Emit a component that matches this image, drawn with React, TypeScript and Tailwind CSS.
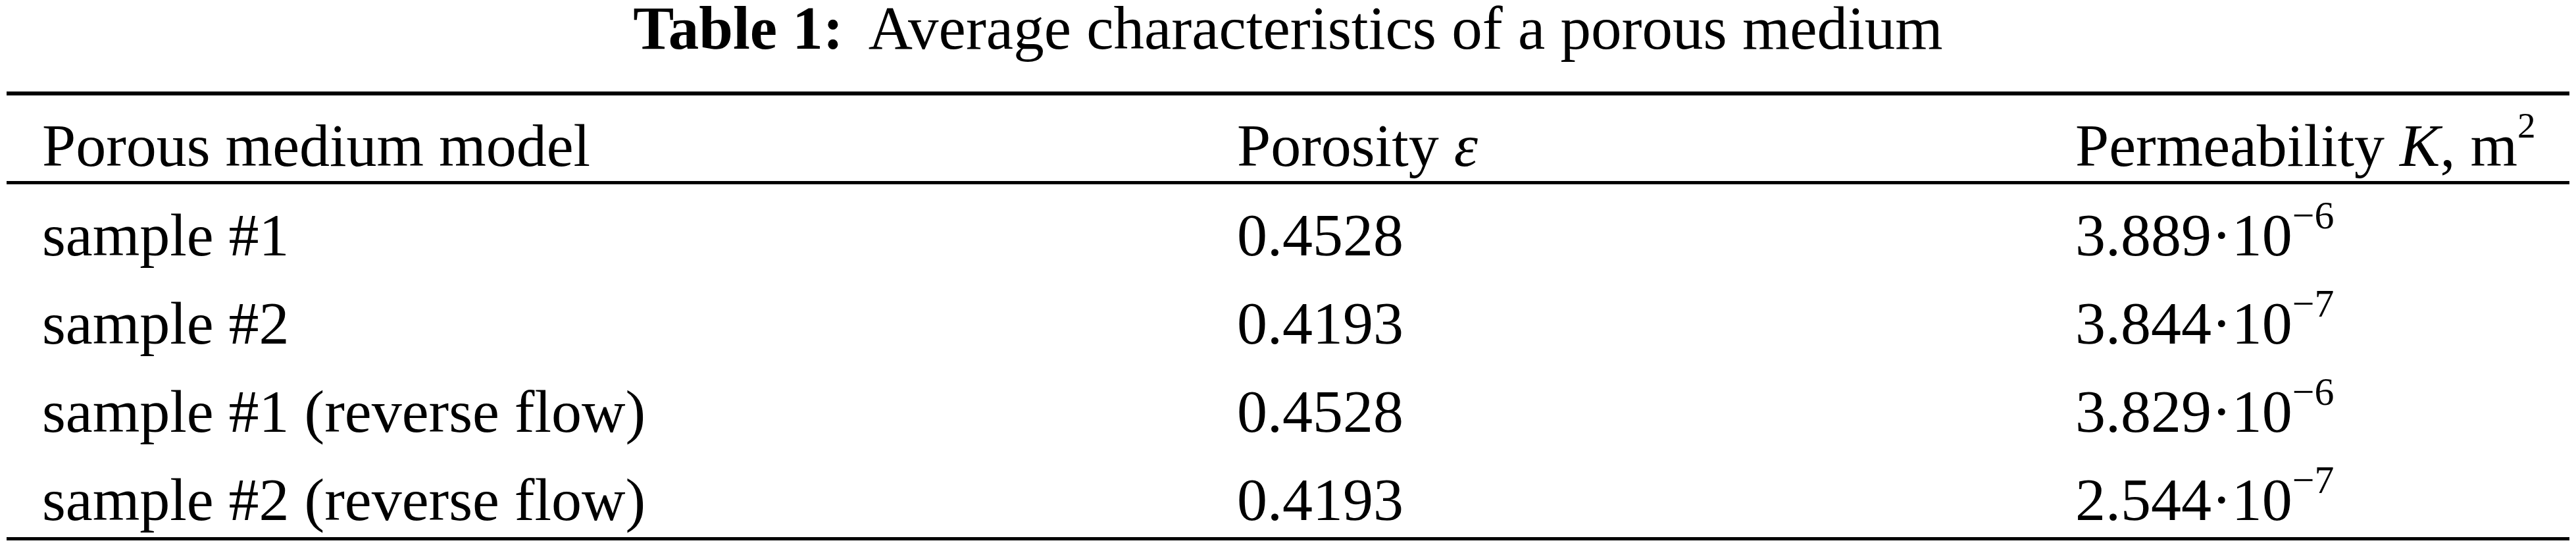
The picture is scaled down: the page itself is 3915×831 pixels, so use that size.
export default function App() {
  const rows = [
    { model: "sample #1", porosity: "0.4528", k: "3.889", exp: "6" },
    { model: "sample #2", porosity: "0.4193", k: "3.844", exp: "7" },
    { model: "sample #1 (reverse flow)", porosity: "0.4528", k: "3.829", exp: "6" },
    { model: "sample #2 (reverse flow)", porosity: "0.4193", k: "2.544", exp: "7" },
  ];

  return (
    <div className="w-[3915px] h-[831px] bg-white text-black font-['Liberation_Serif',serif] px-[10px]">
      {/* caption */}
      <div className="h-[139px] flex justify-center text-[93px] leading-[85px] whitespace-nowrap">
        <span className="font-bold">Table 1:</span>
        <span className="ml-[38px]">Average characteristics of a porous medium</span>
      </div>

      <div className="border-t-[6px] border-b-[5px] border-black">
        <div className="grid grid-cols-[1816px_1274px_1fr] text-[92px] leading-[108px] pt-[22px] whitespace-nowrap">
          <div className="pl-[54px]">Porous medium model</div>
          <div className="pl-[54px]">
            Porosity <i>ε</i>
          </div>
          <div className="pl-[54px]">
            Permeability <i>K</i>, m<sup className="text-[0.6em] top-[-0.78em]">2</sup>
          </div>
        </div>
      </div>

      <div className="border-b-[5px] border-black">
        {rows.map((r, i) => (
          <div
            key={i}
            className="grid grid-cols-[1816px_1274px_1fr] text-[92px] leading-[114px] pt-[20px] whitespace-nowrap"
          >
            <div className="pl-[54px]">{r.model}</div>
            <div className="pl-[54px]">{r.porosity}</div>
            <div className="pl-[54px]">
              {r.k}·10<sup className="text-[0.65em] top-[-0.68em]">−{r.exp}</sup>
            </div>
          </div>
        ))}
      </div>
    </div>
  );
}
